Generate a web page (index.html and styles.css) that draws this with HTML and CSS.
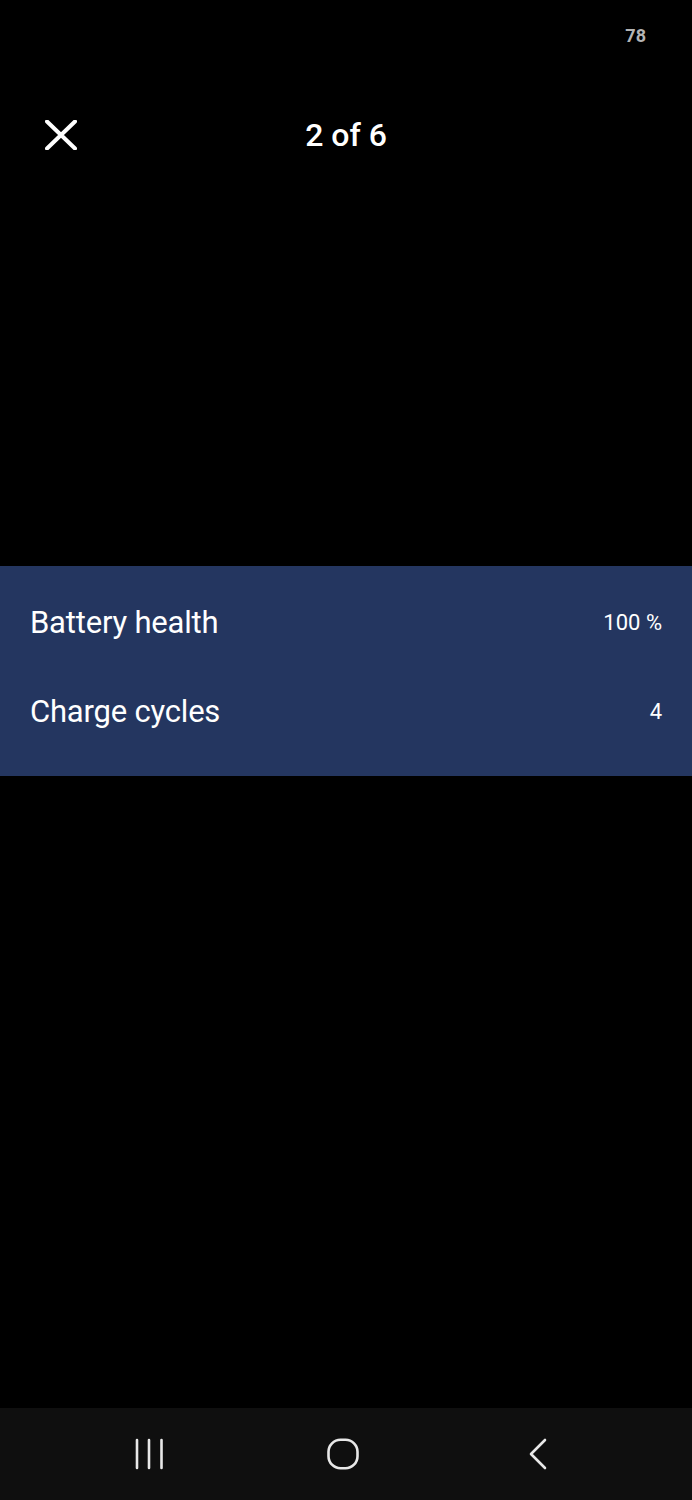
FILE: index.html
```html
<!DOCTYPE html>
<html lang="en">
<head>
    <meta charset="UTF-8">
    <meta name="viewport" content="width=device-width, initial-scale=1.0">
    <title>Battery</title>
    <link rel="stylesheet" href="styles.css">
</head>
<body>
    <div class="screen">
        <div class="status-bar">
            <span class="status-num">78</span>
        </div>
        <div class="header">
            <button class="close-btn" aria-label="Close">
                <svg width="32" height="30" viewBox="0 0 32 30">
                    <path d="M2 1.5 L30 28.5 M30 1.5 L2 28.5" stroke="#fff" stroke-width="4" stroke-linecap="round" fill="none"/>
                </svg>
            </button>
            <div class="title">2 of 6</div>
        </div>
        <div class="content">
            <div class="panel">
                <div class="row">
                    <span class="label">Battery health</span>
                    <span class="value">100 %</span>
                </div>
                <div class="row">
                    <span class="label">Charge cycles</span>
                    <span class="value">4</span>
                </div>
            </div>
        </div>
        <div class="nav-bar">
            <div class="nav-icon">
                <svg width="40" height="32" viewBox="0 0 40 32">
                    <path d="M8 2 V30 M20 2 V30 M32.5 2 V30" stroke="#e8e8e8" stroke-width="2.6" stroke-linecap="round"/>
                </svg>
            </div>
            <div class="nav-icon">
                <svg width="40" height="32" viewBox="0 0 40 32">
                    <rect x="5.5" y="1.8" width="29" height="28.4" rx="12" ry="12" stroke="#e8e8e8" stroke-width="2.6" fill="none"/>
                </svg>
            </div>
            <div class="nav-icon">
                <svg width="40" height="32" viewBox="0 0 40 32">
                    <path d="M28 2 L14 16 L28 30" stroke="#e8e8e8" stroke-width="2.6" stroke-linecap="round" stroke-linejoin="round" fill="none"/>
                </svg>
            </div>
        </div>
    </div>
</body>
</html>
```

FILE: styles.css
```css
body {
    margin: 0;
    background-color: #000;
    color: #fff;
    font-family: Roboto, "Noto Sans", sans-serif;
}
.screen {
    height: 1500px;
    display: flex;
    flex-direction: column;
}
.status-bar {
    height: 70px;
    display: flex;
    align-items: center;
    justify-content: flex-end;
    padding-right: 46px;
}
.status-num {
    font-size: 18px;
    font-weight: 700;
    color: #b4b4b4;
}
.header {
    height: 130px;
    display: flex;
    align-items: center;
    justify-content: center;
    position: relative;
}
.close-btn {
    position: absolute;
    left: 45px;
    top: 50px;
    background: none;
    border: none;
    padding: 0;
    display: flex;
}
.title {
    font-size: 32px;
    font-weight: 500;
}
.content {
    flex: 1;
    padding-top: 366px;
}
.panel {
    background-color: #243660;
    padding: 12px 30px 20px 30px;
}
.row {
    height: 89px;
    display: flex;
    align-items: center;
    justify-content: space-between;
}
.label {
    font-size: 31px;
    letter-spacing: -0.2px;
}
.value {
    font-size: 22px;
}
.nav-bar {
    height: 92px;
    background-color: #0f0f0f;
    display: flex;
    align-items: center;
    justify-content: center;
    gap: 154px;
    padding-right: 6px;
}
.nav-icon {
    width: 40px;
    height: 32px;
    display: flex;
}
```
